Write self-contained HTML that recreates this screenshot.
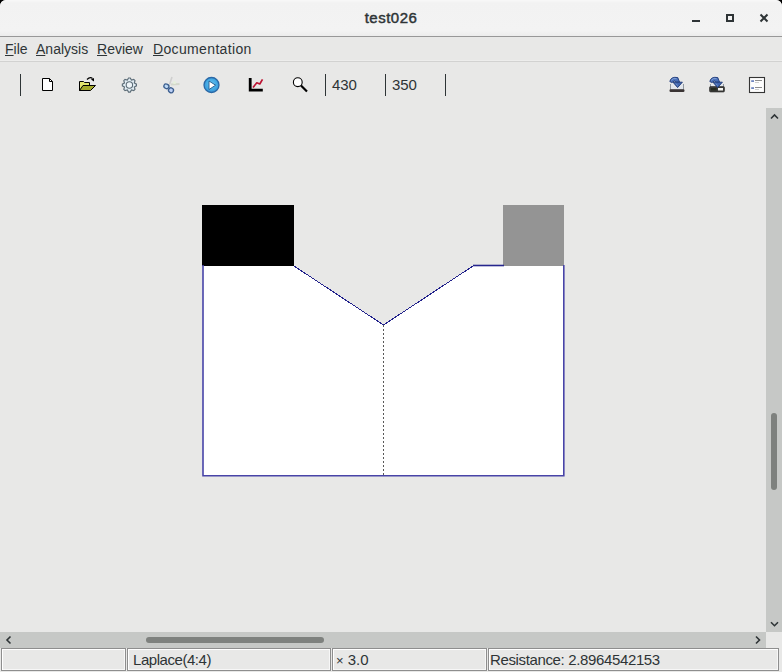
<!DOCTYPE html>
<html><head><meta charset="utf-8">
<style>
html,body{margin:0;padding:0;}
body{width:782px;height:672px;overflow:hidden;position:relative;background:#000;font-family:"Liberation Sans",sans-serif;}
.abs{position:absolute;}
#win{position:absolute;left:0;top:0;width:782px;height:672px;background:#e8e8e7;border-radius:6px 6px 0 0;overflow:hidden;}
#title{position:absolute;left:0;top:0;width:782px;height:36px;background:linear-gradient(#f8f8f8 0px,#f2f2f2 3px,#f3f3f3 31px,#ececec 36px);border-bottom:1px solid #989898;}
#title .t{position:absolute;left:0;width:782px;top:9px;text-align:center;font-weight:normal;-webkit-text-stroke:0.45px #2e3436;letter-spacing:0.5px;font-size:15px;color:#2e3436;line-height:17px;}
#menu{position:absolute;left:0;top:37px;width:782px;height:24px;background:#e8e8e7;border-bottom:1px solid #d2d2d1;box-shadow:inset 0 -1px 0 #ededec;}
#menu span{position:absolute;top:4px;font-size:14px;line-height:16px;color:#2e3436;}
#menu u{text-decoration:underline;text-underline-offset:1px;}
.sep{position:absolute;width:1px;background:#2e3436;top:74px;height:22px;}
.tbtxt{position:absolute;top:76px;font-size:15px;letter-spacing:-0.1px;line-height:17px;color:#2e3436;}
#vs{position:absolute;left:766px;top:108px;width:16px;height:524px;background:#c6c8c6;}
#hs{position:absolute;left:0;top:632px;width:766px;height:16px;background:#c6c8c6;}
.thumb{position:absolute;background:#7e817e;border-radius:3px;}
.fld{position:absolute;top:648px;height:21px;border:1px solid #8e8e8e;box-shadow:inset 1px 1px 0 #fff,inset -1px -1px 0 #f7f7f7;background:#e8e8e7;box-sizing:content-box;}
.fld span{position:absolute;top:2px;font-size:15px;line-height:17px;color:#2e3436;white-space:nowrap;}
</style></head><body>
<div id="win">
  <div id="title"><div class="t">test026</div>
    <div class="abs" style="left:692px;top:20px;width:8px;height:2px;background:#2e3436;"></div>
    <div class="abs" style="left:726px;top:14px;width:4px;height:4px;border:2px solid #2e3436;"></div>
    <svg class="abs" style="left:758px;top:12px" width="12" height="12" viewBox="0 0 12 12"><path d="M2.5 2.5L9.5 9.5M9.5 2.5L2.5 9.5" stroke="#2e3436" stroke-width="2"/></svg>
  </div>
  <div id="menu">
    <span style="left:5px"><u>F</u>ile</span>
    <span style="left:36px"><u>A</u>nalysis</span>
    <span style="left:97px"><u>R</u>eview</span>
    <span style="left:153px;letter-spacing:0.35px"><u>D</u>ocumentation</span>
  </div>
  <!-- toolbar -->
  <div class="sep" style="left:20px"></div>
  <div class="sep" style="left:325px"></div>
  <div class="sep" style="left:385px"></div>
  <div class="sep" style="left:445px"></div>
  <div class="tbtxt" style="left:332px">430</div>
  <div class="tbtxt" style="left:392px">350</div>


  <!-- icons -->
  <svg class="abs" style="left:0;top:60px" width="782" height="48" viewBox="0 60 782 48">
    <!-- new file -->
        <path d="M42.5 78.5H49.5L52.5 81.5V90.5H42.5Z" fill="#fff" stroke="#000" stroke-width="1"/>
    <path d="M49.5 78.5V81.5H52.5" fill="none" stroke="#000" stroke-width="1"/>
    <!-- open folder -->
        <path d="M79.5 90.5V81.5H83.5L84.5 82.5H89.5V85.5H83.5L80.5 90.5Z" fill="#e3e66e" stroke="#000" stroke-width="1"/>
    <path d="M79.5 90.5L83 85.5H95.5L90.5 90.5Z" fill="#a4a92b" stroke="#000" stroke-width="1"/>
    <path d="M87 79.5Q90 76.5 92.5 78.5" fill="none" stroke="#000" stroke-width="1.2"/>
    <path d="M91 79.5L94 78L94 81.5Z" fill="#000"/>
    <!-- gear -->
    <g transform="translate(129.4 85)">
      <path d="M-0.85 -7.05L0.85 -7.05L2.03 -4.90L4.38 -5.59L5.59 -4.38L4.90 -2.03L7.05 -0.85L7.05 0.85L4.90 2.03L5.59 4.38L4.38 5.59L2.03 4.90L0.85 7.05L-0.85 7.05L-2.03 4.90L-4.38 5.59L-5.59 4.38L-4.90 2.03L-7.05 0.85L-7.05 -0.85L-4.90 -2.03L-5.59 -4.38L-4.38 -5.59L-2.03 -4.90Z" fill="#e2edf4" stroke="#5d6d78" stroke-width="1.15"/>
      <circle r="3.2" fill="#edf4f8" stroke="#5d6d78" stroke-width="1.1"/>
    </g>
    <!-- scissors -->
    <path d="M169.5 84.5L172 77" stroke="#cfcfcf" stroke-width="1.6"/>
    <path d="M171 84.5L179.5 84" stroke="#d4d8cc" stroke-width="1.8"/>
    <circle cx="174.5" cy="82.5" r="1.6" fill="#e6f0dc"/>
    <ellipse cx="166.4" cy="86.3" rx="2.6" ry="2.2" transform="rotate(30 166.4 86.3)" fill="#bcd8f4" stroke="#3d5f8f" stroke-width="1.3"/>
    <ellipse cx="171" cy="90.3" rx="2.5" ry="2.4" transform="rotate(30 171 90.3)" fill="#bcd0f6" stroke="#3d5f8f" stroke-width="1.3"/>
    <!-- play -->
    <defs><radialGradient id="pg" cx="0.5" cy="0.45" r="0.55"><stop offset="0" stop-color="#6cc4f0"/><stop offset="0.7" stop-color="#3fa6e2"/><stop offset="1" stop-color="#3a8fd0"/></radialGradient></defs>
    <circle cx="211.5" cy="85" r="7.5" fill="url(#pg)" stroke="#2a68a6" stroke-width="1.3"/>
    <path d="M209 81L215.6 85.2L209 89.5Z" fill="#fff" stroke="#1f5a8e" stroke-width="0.9" stroke-linejoin="round"/>
    <!-- chart -->
    <path d="M250.2 78V90.2H262.8" fill="none" stroke="#000" stroke-width="2.8"/>
    <path d="M253 87.5L256.8 82.8L259.8 84L262.5 79.3" fill="none" stroke="#bd1433" stroke-width="1.7" stroke-linejoin="round"/>
    <!-- magnifier -->
    <circle cx="297.8" cy="82.2" r="4.4" fill="#fff" stroke="#000" stroke-width="1.1"/>
    <path d="M301 85.5L307 91.5" stroke="#000" stroke-width="2.2"/>
    <!-- import 1 -->
    <path d="M670.5 84V90H683.5V84" fill="#e2e6ec" stroke="#9098a0" stroke-width="1"/>
    <rect x="669.5" y="89.3" width="15" height="2.7" rx="1.2" fill="#3a3434"/>
    <path d="M669.8 81.5Q671 76.2 677.8 77.6L679.6 82.2L676.4 82.2Q675 79.6 671.8 82.6Z" fill="#4a70b8" stroke="#1e3a78" stroke-width="0.9" stroke-linejoin="round"/>
    <path d="M673 82.2H682.4L677.6 87.6Z" fill="#4166ae" stroke="#1e3a78" stroke-width="0.9" stroke-linejoin="round"/>
    <path d="M671.2 80.4Q673 77.8 676.6 78.6" fill="none" stroke="#9cb8e6" stroke-width="0.7"/>
    <path d="M676 83.6L677.6 85.6" fill="none" stroke="#8aa8dc" stroke-width="0.7"/>
    <!-- import 2 -->
    <path d="M710.5 84V90H723.5V84" fill="#e2e6ec" stroke="#9098a0" stroke-width="1"/>
    <rect x="709.5" y="86.5" width="15" height="5.5" rx="1.2" fill="#3a3a38" stroke="#2a2a28" stroke-width="0.6"/>
    <rect x="718" y="88" width="5" height="2.5" fill="#f4f4f0"/>
    <rect x="711" y="88" width="5.5" height="2.5" fill="#252a20"/>
    <path d="M709.8 81.5Q711 76.2 717.8 77.6L719.6 82.2L716.4 82.2Q715 79.6 711.8 82.6Z" fill="#4a70b8" stroke="#1e3a78" stroke-width="0.9" stroke-linejoin="round"/>
    <path d="M713 82.2H722.4L717.6 87.6Z" fill="#4166ae" stroke="#1e3a78" stroke-width="0.9" stroke-linejoin="round"/>
    <path d="M711.2 80.4Q713 77.8 716.6 78.6" fill="none" stroke="#9cb8e6" stroke-width="0.7"/>
    <path d="M716 83.6L717.6 85.6" fill="none" stroke="#8aa8dc" stroke-width="0.7"/>
    <!-- form -->
    <rect x="749.5" y="77.5" width="15" height="15" fill="#fdfdfd" stroke="#353535" stroke-width="1.1"/>
    <rect x="751.2" y="80.2" width="2.8" height="1.8" fill="#6f86bf"/>
    <rect x="751.2" y="87.2" width="2.8" height="1.8" fill="#6f86bf"/>
    <rect x="755" y="80" width="7" height="1" fill="#8c8c8c"/>
    <rect x="755" y="82" width="4" height="1" fill="#cfcfcf"/>
    <rect x="755" y="87" width="7" height="1" fill="#8c8c8c"/>
    <rect x="755" y="89" width="4" height="1" fill="#cfcfcf"/>
  </svg>

  <!-- canvas drawing -->
  <svg class="abs" style="left:0;top:108px" width="766" height="524" viewBox="0 108 766 524">
    <polygon points="203,266 294,266 383.5,325 473,266 564,266 564,476 203,476" fill="#fff"/>
    <rect x="202" y="205" width="92" height="61" fill="#000"/>
    <rect x="503" y="205" width="61" height="61" fill="#949494"/>
    <polyline points="203,265 203,475.8 563.8,475.8 563.8,265" fill="none" stroke="#4844a8" stroke-width="1.6"/>
    <polyline points="294,266 383.5,325 473,266" fill="none" stroke="#22228c" stroke-width="1" shape-rendering="crispEdges"/>
    <line x1="473" y1="265.5" x2="504" y2="265.5" stroke="#26268e" stroke-width="1.6"/>
    <line x1="383.5" y1="325" x2="383.5" y2="475" stroke="#585858" stroke-width="1" stroke-dasharray="2,2"/>
  </svg>

  <div id="vs">
    <div class="thumb" style="left:5px;top:305px;width:6px;height:77px;"></div>
    <svg class="abs" style="left:0;top:0" width="16" height="16"><path d="M5 10.5L8.5 7L12 10.5" fill="none" stroke="#2e3436" stroke-width="1.6"/></svg>
    <svg class="abs" style="left:0;top:508px" width="16" height="16"><path d="M5 6.2L8.5 9.7L12 6.2" fill="none" stroke="#2e3436" stroke-width="1.6"/></svg>
  </div>
  <div id="hs">
    <div class="thumb" style="left:146px;top:5px;width:178px;height:6px;"></div>
    <svg class="abs" style="left:0;top:0" width="16" height="16"><path d="M10.5 4.5L7 8L10.5 11.5" fill="none" stroke="#2e3436" stroke-width="1.6"/></svg>
    <svg class="abs" style="left:750px;top:0" width="16" height="16"><path d="M6 4.5L9.5 8L6 11.5" fill="none" stroke="#2e3436" stroke-width="1.6"/></svg>
  </div>

  <!-- status -->
  <div class="fld" style="left:1px;width:123px"></div>
  <div class="fld" style="left:127px;width:202px"><span style="left:5px;letter-spacing:-0.45px">Laplace(4:4)</span></div>
  <div class="fld" style="left:332px;width:153px"><span style="left:3px"><span style="position:static;font-size:13px">×</span> 3.0</span></div>
  <div class="fld" style="left:488px;width:289px"><span style="left:1px;letter-spacing:-0.36px">Resistance: 2.8964542153</span></div>
</div>
</body></html>
